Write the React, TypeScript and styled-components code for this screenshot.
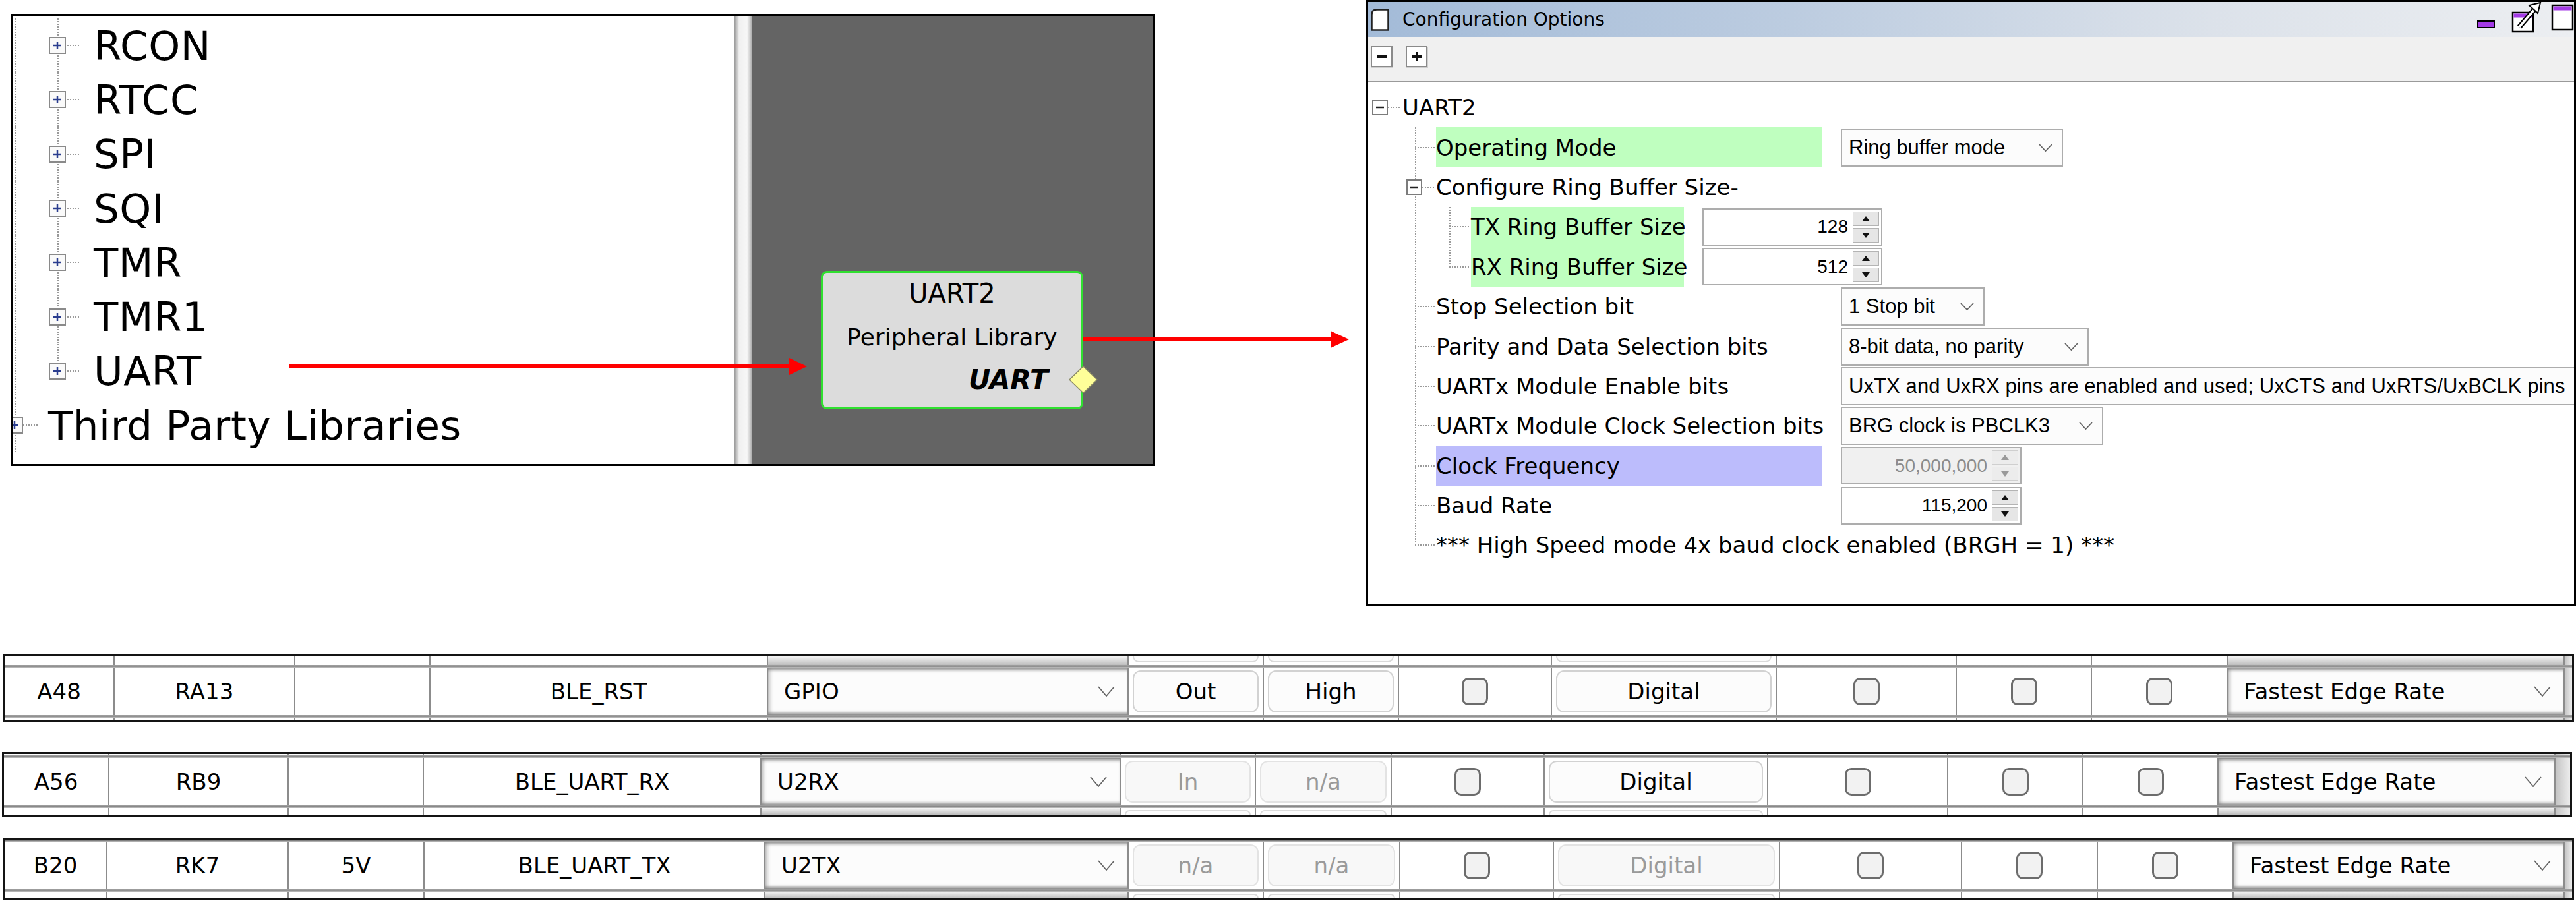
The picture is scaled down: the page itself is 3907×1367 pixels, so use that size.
import React from 'react';
import styled, { createGlobalStyle } from 'styled-components';

const GREEN = '#bfffbf';
const PURPLE = '#bcbcfc';
const DOT = '#9a9a9a';
const dotV = `repeating-linear-gradient(to bottom, ${DOT} 0 2px, transparent 2px 4px)`;
const dotH = `repeating-linear-gradient(to right, ${DOT} 0 2px, transparent 2px 4px)`;

const GlobalStyle = createGlobalStyle`
  html, body { margin: 0; padding: 0; background: #ffffff; }
  body { width: 3907px; height: 1367px; overflow: hidden; font-family: "DejaVu Sans", Verdana, sans-serif; }
  *, *::before, *::after { box-sizing: border-box; }
`;

const Page = styled.div`
  position: relative;
  width: 3907px;
  height: 1367px;
  display: flex;
  flex-direction: column;
  background: #fff;
`;

const TopSection = styled.div`
  flex: none;
  display: flex;
  align-items: flex-start;
  height: 920px;
`;

/* ---------- generic tree guide ---------- */
type BranchProps = { $w: number; $lineX?: number; $vert?: 'none' | 'full' | 'half'; $hFrom?: number; $hLen?: number };
const Branch = styled.div<BranchProps>`
  flex: none;
  width: ${p => p.$w}px;
  align-self: stretch;
  display: flex;
  align-items: center;
  background-image: ${dotV}, ${dotH};
  background-repeat: no-repeat;
  background-size: ${p => (!p.$vert || p.$vert === 'none' ? '0 0' : `2px ${p.$vert === 'half' ? '50%' : '100%'}`)}, ${p => p.$hLen ?? 0}px 2px;
  background-position: ${p => p.$lineX ?? 0}px 0, ${p => p.$hFrom ?? 0}px 50%;
`;

const Glyph = styled.svg<{ $ml?: number }>`
  flex: none;
  display: block;
  margin-left: ${p => p.$ml ?? 0}px;
`;

/* ---------- left screenshot ---------- */
const Shot = styled.div`
  flex: none;
  margin: 21px 0 0 16px;
  width: 1736px;
  height: 686px;
  border: 3px solid #000;
  display: flex;
  overflow: hidden;
`;
const TreePane = styled.div`
  flex: none;
  width: 1094px;
  background: #fff;
  padding-top: 4px;
  overflow: hidden;
  font-family: "DejaVu Sans", Verdana, sans-serif;
  font-size: 61px;
  letter-spacing: 0.6px;
  color: #000;
`;
const TreeRow = styled.div`
  height: 82.3px;
  display: flex;
  align-items: center;
  white-space: nowrap;
`;
const TreeText = styled.span`
  line-height: 1;
`;
const Splitter = styled.div`
  flex: none;
  width: 28px;
  background: linear-gradient(to right, #8e8e8e 0, #bdbdbd 4px, #f0f0f0 8px, #f7f7f7 20px, #c9c9c9 25px, #9d9d9d 28px);
`;
const Canvas = styled.div`
  position: relative;
  flex: 1;
  background: #646464;
`;
const Node = styled.div`
  position: absolute;
  left: 104px;
  top: 387px;
  width: 398px;
  height: 210px;
  border: 3px solid #30e030;
  border-radius: 9px;
  background: #dcdcdc;
  display: flex;
  flex-direction: column;
  align-items: center;
  padding-top: 9px;
  font-family: "DejaVu Sans", Verdana, sans-serif;
  color: #000;
`;
const NodeTitle = styled.div`
  font-size: 40px;
  line-height: 44px;
`;
const NodeSub = styled.div`
  font-size: 36px;
  line-height: 44px;
  margin-top: 23px;
`;
const NodeKind = styled.div`
  align-self: flex-end;
  margin: 20px 50px 0 0;
  font-size: 41px;
  line-height: 44px;
  font-weight: bold;
  font-style: italic;
`;
const Port = styled.svg`
  position: absolute;
  right: -25px;
  top: 141px;
`;

const ArrowSvg = styled.svg<{ $x: number; $y: number }>`
  position: absolute;
  left: ${p => p.$x}px;
  top: ${p => p.$y}px;
  pointer-events: none;
`;

/* ---------- config window ---------- */
const Window = styled.div`
  flex: none;
  margin-left: 320px;
  width: 1835px;
  height: 920px;
  border: 3px solid #000;
  display: flex;
  flex-direction: column;
  overflow: hidden;
  background: #fff;
`;
const TitleBar = styled.div`
  flex: none;
  height: 53px;
  display: flex;
  align-items: center;
  padding-left: 4px;
  background: linear-gradient(to right, #a3bbd8 0%, #bccce0 35%, #dce2ea 70%, #eceef1 100%);
`;
const TitleText = styled.span`
  margin-left: 20px;
  font-family: "DejaVu Sans", Verdana, sans-serif;
  font-size: 28px;
  color: #000;
`;
const WinCtrls = styled.svg`
  flex: none;
  display: block;
  margin-left: auto;
  align-self: flex-start;
`;
const Toolbar = styled.div`
  flex: none;
  height: 69px;
  background: #f0f0f0;
  border-bottom: 2px solid #9a9a9a;
  display: flex;
  align-items: flex-start;
  gap: 20px;
  padding: 14px 0 0 4px;
`;
const ToolBtn = styled.div`
  width: 33px;
  height: 32px;
  border: 2px solid #8a8a8a;
  background: #fff;
  display: flex;
  align-items: center;
  justify-content: center;
  box-shadow: 1px 1px 0 #cfcfcf;
`;
const CfgTree = styled.div`
  flex: 1;
  padding-top: 8px;
  font-family: "DejaVu Sans", Verdana, sans-serif;
  font-size: 34px;
  color: #000;
`;
const CfgRow = styled.div`
  height: 60.4px;
  display: flex;
  align-items: center;
  white-space: nowrap;
`;
const Label = styled.div<{ $w?: number; $bg?: string }>`
  flex: none;
  ${p => (p.$w ? `width: ${p.$w}px;` : '')}
  align-self: stretch;
  display: flex;
  align-items: center;
  background: ${p => p.$bg ?? 'transparent'};
`;
const Select = styled.div<{ $w: number; $ml: number; $track?: number }>`
  flex: none;
  width: ${p => p.$w}px;
  height: 58px;
  margin-left: ${p => p.$ml}px;
  border: 2px solid #adadad;
  background: #fcfcfc;
  display: flex;
  align-items: center;
  justify-content: space-between;
  gap: 20px;
  padding: 0 14px 0 10px;
  font-family: "Liberation Sans", Arial, sans-serif;
  font-size: 31px;
  letter-spacing: ${p => p.$track ?? 0}px;
  color: #000;
`;
const SelectText = styled.span`
  flex: none;
`;
const Spin = styled.div<{ $w: number; $ml: number; $off?: boolean }>`
  flex: none;
  width: ${p => p.$w}px;
  height: 57px;
  margin-left: ${p => p.$ml}px;
  border: 2px solid #adadad;
  background: ${p => (p.$off ? '#f0f0f0' : '#fff')};
  display: flex;
  align-items: center;
  justify-content: flex-end;
  padding-right: 3px;
  font-family: "Liberation Sans", Arial, sans-serif;
  font-size: 28px;
  color: ${p => (p.$off ? '#8c8c8c' : '#000')};
`;
const SpinValue = styled.span`
  margin-right: 7px;
`;
const SpinBtns = styled.div`
  width: 40px;
  height: 47px;
  display: flex;
  flex-direction: column;
  gap: 3px;
`;
const SpinHalf = styled.div<{ $off?: boolean }>`
  flex: 1;
  border: 1px solid ${p => (p.$off ? '#cfcfcf' : '#b4b4b4')};
  background: ${p => (p.$off ? '#ececec' : '#e6e6e6')};
  display: flex;
  align-items: center;
  justify-content: center;
`;

/* ---------- bottom strips ---------- */
const Strip = styled.div<{ $ml: number; $w: number; $mt: number }>`
  flex: none;
  margin: ${p => p.$mt}px 0 0 ${p => p.$ml}px;
  width: ${p => p.$w}px;
  border: 3px solid #141414;
  display: flex;
  flex-direction: column;
  background: #fff;
  overflow: hidden;
`;
const GridRow = styled.div<{ $cols: string; $h: number }>`
  flex: none;
  display: grid;
  grid-template-columns: ${p => p.$cols};
  height: ${p => p.$h}px;
`;
const RowDivider = styled.div<{ $h: number }>`
  flex: none;
  height: ${p => p.$h}px;
  background: linear-gradient(to bottom, #a6a6a6 0, #808080 50%, #c6c6c6 100%);
`;
const Cell = styled.div<{ $last?: boolean }>`
  min-width: 0;
  overflow: hidden;
  border-right: ${p => (p.$last ? 'none' : '2px solid #8c8c8c')};
  display: flex;
  align-items: center;
  justify-content: center;
  font-family: "DejaVu Sans", Verdana, sans-serif;
  font-size: 34px;
  color: #000;
  white-space: nowrap;
`;
const SelectCell = styled(Cell)`
  justify-content: space-between;
  padding: 0 19px 0 24px;
  background: #fcfcfc;
  box-shadow: inset 0 7px 5px -4px #808080, inset 0 -7px 5px -4px #808080, inset 8px 0 6px -6px #b0b0b0;
`;
const BtnCell = styled(Cell)`
  align-items: stretch;
  padding: 4px 6px;
`;
const Btn = styled.div<{ $off?: boolean }>`
  flex: 1;
  border: 2px solid ${p => (p.$off ? '#e3e3e3' : '#d2d2d2')};
  border-radius: 12px;
  background: ${p => (p.$off ? '#f8f8f8' : '#fcfcfc')};
  color: ${p => (p.$off ? '#9a9a9a' : '#000')};
  display: flex;
  align-items: center;
  justify-content: center;
`;
const Check = styled.div`
  width: 40px;
  height: 42px;
  border: 3px solid #6c6c6c;
  border-radius: 10px;
  background: #f2f2f2;
`;
const TailCell = styled.div`
  background: linear-gradient(to right, #c4c4c4, #ececec);
`;
const SliverCell = styled.div<{ $last?: boolean; $pos: 'top' | 'bottom' }>`
  min-width: 0;
  border-right: ${p => (p.$last ? 'none' : '2px solid #8c8c8c')};
  display: flex;
  align-items: ${p => (p.$pos === 'top' ? 'flex-start' : 'flex-end')};
  padding: 0 6px;
`;
const SliverSelect = styled.div<{ $last?: boolean }>`
  border-right: ${p => (p.$last ? 'none' : '2px solid #8c8c8c')};
  background: linear-gradient(to bottom, #f4f4f4, #bdbdbd);
`;
const SliverBtn = styled.div<{ $pos: 'top' | 'bottom' }>`
  flex: 1;
  height: ${p => (p.$pos === 'top' ? 'calc(100% - 4px)' : 'calc(100% - 3px)')};
  border: 2px solid #dadada;
  ${p => (p.$pos === 'top' ? 'border-top: none; border-radius: 0 0 12px 12px;' : 'border-bottom: none; border-radius: 12px 12px 0 0;')}
  background: #fbfbfb;
`;

/* ---------- drawings ---------- */
const PlusBox = ({ clip = 0 }: { clip?: number }) => (
  <Glyph width={26 - clip} height={26} viewBox={`${clip} 0 ${26 - clip} 26`}>
    <rect x="1" y="1" width="24" height="24" fill="#fafafa" stroke="#8a8a8a" strokeWidth="2" />
    <line x1="7" y1="13" x2="19" y2="13" stroke="#2a3d8f" strokeWidth="2.5" />
    <line x1="13" y1="7" x2="13" y2="19" stroke="#2a3d8f" strokeWidth="2.5" />
  </Glyph>
);

const MinusBox = ({ ml = 0 }: { ml?: number }) => (
  <Glyph $ml={ml} width={24} height={24} viewBox="0 0 24 24">
    <rect x="1" y="1" width="22" height="22" fill="#fff" stroke="#7c7c7c" strokeWidth="2" />
    <line x1="6" y1="12" x2="18" y2="12" stroke="#222" strokeWidth="2.5" />
  </Glyph>
);

const Chevron = ({ w, h, color = '#666' }: { w: number; h: number; color?: string }) => (
  <Glyph width={w} height={h} viewBox={`0 0 ${w} ${h}`}>
    <polyline points={`1,1 ${w / 2},${h - 1} ${w - 1},1`} fill="none" stroke={color} strokeWidth="1.8" />
  </Glyph>
);

const Tri = ({ up, off }: { up: boolean; off?: boolean }) => (
  <Glyph width={12} height={8} viewBox="0 0 12 8">
    <polygon points={up ? '6,0 12,8 0,8' : '0,0 12,0 6,8'} fill={off ? '#9a9a9a' : '#111'} />
  </Glyph>
);

const PageIcon = () => (
  <Glyph width={28} height={34} viewBox="0 0 28 34">
    <path d="M9 1.5 H26.5 V32.5 H1.5 V9 Q1.5 1.5 9 1.5 Z" fill="#fff" stroke="#222" strokeWidth="2.5" />
  </Glyph>
);

const ControlsDrawing = () => (
  <WinCtrls width={147} height={50} viewBox="0 0 147 50">
    <rect x="1" y="29" width="25" height="10" fill="#a43be6" stroke="#000" strokeWidth="2" />
    <rect x="54" y="16" width="31" height="29" fill="#fff" stroke="#000" strokeWidth="2.5" />
    <rect x="55.5" y="17.5" width="28" height="6" fill="#a43be6" />
    <line x1="64" y1="38" x2="88" y2="10" stroke="#000" strokeWidth="8" />
    <line x1="64" y1="38" x2="88" y2="10" stroke="#fff" strokeWidth="3.5" />
    <polygon points="96,1 79,5 92,17" fill="#fff" stroke="#000" strokeWidth="2" />
    <rect x="114" y="5" width="31" height="37" fill="#fff" stroke="#000" strokeWidth="2.5" />
    <rect x="115.5" y="6.5" width="28" height="6" fill="#a43be6" />
  </WinCtrls>
);

/* ---------- data ---------- */
const treeItems = ['RCON', 'RTCC', 'SPI', 'SQI', 'TMR', 'TMR1', 'UART'];

type CfgItem =
  | { kind: 'root'; label: string }
  | { kind: 'group'; label: string }
  | {
      kind: 'leaf';
      lvl: 1 | 2;
      label: string;
      last?: boolean;
      bg?: string;
      ctrl?: { type: 'select'; w: number; text: string; track?: number } | { type: 'spin'; w: number; text: string; off?: boolean };
    };

const cfgItems: CfgItem[] = [
  { kind: 'root', label: 'UART2' },
  { kind: 'leaf', lvl: 1, label: 'Operating Mode', bg: GREEN, ctrl: { type: 'select', w: 337, text: 'Ring buffer mode' } },
  { kind: 'group', label: 'Configure Ring Buffer Size-' },
  { kind: 'leaf', lvl: 2, label: 'TX Ring Buffer Size', bg: GREEN, ctrl: { type: 'spin', w: 273, text: '128' } },
  { kind: 'leaf', lvl: 2, last: true, label: 'RX Ring Buffer Size', bg: GREEN, ctrl: { type: 'spin', w: 273, text: '512' } },
  { kind: 'leaf', lvl: 1, label: 'Stop Selection bit', ctrl: { type: 'select', w: 218, text: '1 Stop bit' } },
  { kind: 'leaf', lvl: 1, label: 'Parity and Data Selection bits', ctrl: { type: 'select', w: 376, text: '8-bit data, no parity' } },
  {
    kind: 'leaf',
    lvl: 1,
    label: 'UARTx Module Enable bits',
    ctrl: { type: 'select', w: 1400, track: 0.1, text: 'UxTX and UxRX pins are enabled and used; UxCTS and UxRTS/UxBCLK pins' },
  },
  { kind: 'leaf', lvl: 1, label: 'UARTx Module Clock Selection bits', ctrl: { type: 'select', w: 398, text: 'BRG clock is PBCLK3' } },
  { kind: 'leaf', lvl: 1, label: 'Clock Frequency', bg: PURPLE, ctrl: { type: 'spin', w: 274, text: '50,000,000', off: true } },
  { kind: 'leaf', lvl: 1, label: 'Baud Rate', ctrl: { type: 'spin', w: 274, text: '115,200' } },
  { kind: 'leaf', lvl: 1, last: true, label: '*** High Speed mode 4x baud clock enabled (BRGH = 1) ***' },
];

type CellSpec = { k: 'text' | 'select' | 'btn' | 'check' | 'empty' | 'tail'; t?: string; off?: boolean };
type StripSpec = { ml: number; w: number; mt: number; cols: number[]; top: number; topDiv: number; bottom: number; cells: CellSpec[] };

const checks: CellSpec[] = [{ k: 'check' }, { k: 'check' }, { k: 'check' }];

const strips: StripSpec[] = [
  {
    ml: 4, w: 3900, mt: 73, top: 13, topDiv: 4, bottom: 4,
    cols: [167, 274, 205, 512, 547, 205, 205, 232, 341, 273, 205, 206, 511, 11],
    cells: [
      { k: 'text', t: 'A48' }, { k: 'text', t: 'RA13' }, { k: 'empty' }, { k: 'text', t: 'BLE_RST' },
      { k: 'select', t: 'GPIO' }, { k: 'btn', t: 'Out' }, { k: 'btn', t: 'High' }, { k: 'check' },
      { k: 'btn', t: 'Digital' }, ...checks, { k: 'select', t: 'Fastest Edge Rate' }, { k: 'tail' },
    ],
  },
  {
    ml: 3, w: 3898, mt: 45, top: 2, topDiv: 4, bottom: 10,
    cols: [160, 272, 205, 512, 545, 205, 206, 232, 339, 273, 205, 205, 511, 22],
    cells: [
      { k: 'text', t: 'A56' }, { k: 'text', t: 'RB9' }, { k: 'empty' }, { k: 'text', t: 'BLE_UART_RX' },
      { k: 'select', t: 'U2RX' }, { k: 'btn', t: 'In', off: true }, { k: 'btn', t: 'n/a', off: true }, { k: 'check' },
      { k: 'btn', t: 'Digital' }, ...checks, { k: 'select', t: 'Fastest Edge Rate' }, { k: 'tail' },
    ],
  },
  {
    ml: 4, w: 3900, mt: 32, top: 0, topDiv: 3, bottom: 10,
    cols: [156, 275, 206, 517, 551, 205, 207, 233, 343, 276, 206, 206, 502, 11],
    cells: [
      { k: 'text', t: 'B20' }, { k: 'text', t: 'RK7' }, { k: 'text', t: '5V' }, { k: 'text', t: 'BLE_UART_TX' },
      { k: 'select', t: 'U2TX' }, { k: 'btn', t: 'n/a', off: true }, { k: 'btn', t: 'n/a', off: true }, { k: 'check' },
      { k: 'btn', t: 'Digital', off: true }, ...checks, { k: 'select', t: 'Fastest Edge Rate' }, { k: 'tail' },
    ],
  },
];

/* ---------- views ---------- */
const MainCell = ({ c, last }: { c: CellSpec; last: boolean }) => {
  switch (c.k) {
    case 'text':
      return <Cell $last={last}>{c.t}</Cell>;
    case 'select':
      return (
        <SelectCell $last={last}>
          <span>{c.t}</span>
          <Chevron w={26} h={16} />
        </SelectCell>
      );
    case 'btn':
      return (
        <BtnCell $last={last}>
          <Btn $off={c.off}>{c.t}</Btn>
        </BtnCell>
      );
    case 'check':
      return (
        <Cell $last={last}>
          <Check />
        </Cell>
      );
    case 'tail':
      return <TailCell />;
    default:
      return <Cell $last={last} />;
  }
};

const SliverView = ({ c, last, pos, h }: { c: CellSpec; last: boolean; pos: 'top' | 'bottom'; h: number }) => {
  if (c.k === 'tail') return <TailCell />;
  if (c.k === 'select') return <SliverSelect $last={last} />;
  if (c.k === 'btn' && h > 5)
    return (
      <SliverCell $last={last} $pos={pos}>
        <SliverBtn $pos={pos} />
      </SliverCell>
    );
  return <SliverCell $last={last} $pos={pos} />;
};

const StripView = ({ s }: { s: StripSpec }) => {
  const cols = s.cols.map(c => `${c}px`).join(' ');
  const n = s.cells.length;
  return (
    <Strip $ml={s.ml} $w={s.w} $mt={s.mt}>
      {s.top > 0 && (
        <GridRow $cols={cols} $h={s.top}>
          {s.cells.map((c, i) => (
            <SliverView key={i} c={c} last={i === n - 1} pos="top" h={s.top} />
          ))}
        </GridRow>
      )}
      <RowDivider $h={s.topDiv} />
      <GridRow $cols={cols} $h={72}>
        {s.cells.map((c, i) => (
          <MainCell key={i} c={c} last={i === n - 1} />
        ))}
      </GridRow>
      <RowDivider $h={4} />
      {s.bottom > 0 && (
        <GridRow $cols={cols} $h={s.bottom}>
          {s.cells.map((c, i) => (
            <SliverView key={i} c={c} last={i === n - 1} pos="bottom" h={s.bottom} />
          ))}
        </GridRow>
      )}
    </Strip>
  );
};

const CfgRowView = ({ item }: { item: CfgItem }) => {
  if (item.kind === 'root') {
    return (
      <CfgRow>
        <Branch $w={52} $hFrom={30} $hLen={20}>
          <MinusBox ml={6} />
        </Branch>
        <Label>{item.label}</Label>
      </CfgRow>
    );
  }
  if (item.kind === 'group') {
    return (
      <CfgRow>
        <Branch $w={58} />
        <Branch $w={45} $lineX={13} $vert="full" $hFrom={24} $hLen={20}>
          <MinusBox />
        </Branch>
        <Label>{item.label}</Label>
      </CfgRow>
    );
  }
  const ml = item.lvl === 1 ? 29 : 28;
  const ctrl = item.ctrl;
  return (
    <CfgRow>
      <Branch $w={71} />
      {item.lvl === 2 && <Branch $w={52} $lineX={0} $vert="full" />}
      <Branch $w={item.lvl === 1 ? 32 : 33} $lineX={0} $vert={item.last ? 'half' : 'full'} $hFrom={0} $hLen={30} />
      <Label $w={ctrl ? (item.lvl === 1 ? 585 : 323) : undefined} $bg={item.bg}>
        {item.label}
      </Label>
      {ctrl && ctrl.type === 'select' && (
        <Select $w={ctrl.w} $ml={ml} $track={ctrl.track}>
          <SelectText>{ctrl.text}</SelectText>
          <Chevron w={21} h={12} />
        </Select>
      )}
      {ctrl && ctrl.type === 'spin' && (
        <Spin $w={ctrl.w} $ml={ml} $off={ctrl.off}>
          <SpinValue>{ctrl.text}</SpinValue>
          <SpinBtns>
            <SpinHalf $off={ctrl.off}>
              <Tri up off={ctrl.off} />
            </SpinHalf>
            <SpinHalf $off={ctrl.off}>
              <Tri up={false} off={ctrl.off} />
            </SpinHalf>
          </SpinBtns>
        </Spin>
      )}
    </CfgRow>
  );
};

export default function App() {
  return (
    <>
      <GlobalStyle />
      <Page>
        <TopSection>
          <Shot>
            <TreePane>
              {treeItems.map((t, i) => (
                <TreeRow key={t}>
                  <Branch $w={55} $lineX={3} $vert="full" />
                  <Branch $w={68} $lineX={13} $vert={i === treeItems.length - 1 ? 'half' : 'full'} $hFrom={28} $hLen={18}>
                    <PlusBox />
                  </Branch>
                  <TreeText>{t}</TreeText>
                </TreeRow>
              ))}
              <TreeRow>
                <Branch $w={54} $lineX={3} $vert="full" $hFrom={16} $hLen={22}>
                  <PlusBox clip={10} />
                </Branch>
                <TreeText>Third Party Libraries</TreeText>
              </TreeRow>
            </TreePane>
            <Splitter />
            <Canvas>
              <Node>
                <NodeTitle>UART2</NodeTitle>
                <NodeSub>Peripheral Library</NodeSub>
                <NodeKind>UART</NodeKind>
                <Port width={44} height={42} viewBox="0 0 44 42">
                  <polygon points="22,1 43,21 22,41 1,21" fill="#ffff99" stroke="#8a8a66" strokeWidth="1.5" />
                </Port>
              </Node>
            </Canvas>
          </Shot>

          <Window>
            <TitleBar>
              <PageIcon />
              <TitleText>Configuration Options</TitleText>
              <ControlsDrawing />
            </TitleBar>
            <Toolbar>
              <ToolBtn>
                <Glyph width={18} height={18} viewBox="0 0 18 18">
                  <line x1="2" y1="9" x2="16" y2="9" stroke="#111" strokeWidth="4" />
                </Glyph>
              </ToolBtn>
              <ToolBtn>
                <Glyph width={18} height={18} viewBox="0 0 18 18">
                  <line x1="2" y1="9" x2="16" y2="9" stroke="#111" strokeWidth="4" />
                  <line x1="9" y1="2" x2="9" y2="16" stroke="#111" strokeWidth="4" />
                </Glyph>
              </ToolBtn>
            </Toolbar>
            <CfgTree>
              {cfgItems.map((it, i) => (
                <CfgRowView key={i} item={it} />
              ))}
            </CfgTree>
          </Window>
        </TopSection>

        {strips.map((s, i) => (
          <StripView key={i} s={s} />
        ))}

        <ArrowSvg $x={438} $y={542} width={786} height={28} viewBox="0 0 786 28">
          <rect x="0" y="11" width="761" height="6" fill="#ff0000" />
          <polygon points="759,1 786,14 759,27" fill="#ff0000" />
        </ArrowSvg>
        <ArrowSvg $x={1643} $y={501} width={403} height={28} viewBox="0 0 403 28">
          <rect x="0" y="11" width="377" height="6" fill="#ff0000" />
          <polygon points="375,1 403,14 375,27" fill="#ff0000" />
        </ArrowSvg>
      </Page>
    </>
  );
}
